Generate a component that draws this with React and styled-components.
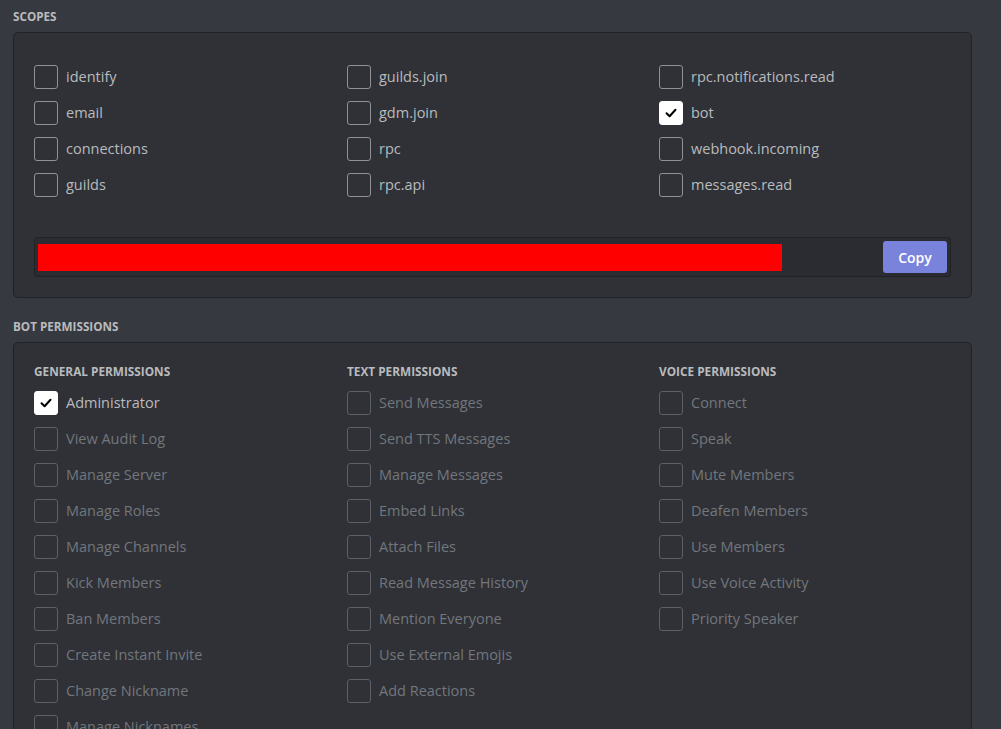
import styled, { createGlobalStyle } from "styled-components";

const scopes = [
  ["identify", "guilds.join", "rpc.notifications.read"],
  ["email", "gdm.join", "bot"],
  ["connections", "rpc", "webhook.incoming"],
  ["guilds", "rpc.api", "messages.read"],
];

const checkedScopes = ["bot"];

const permissionGroups = [
  {
    title: "General Permissions",
    items: [
      "Administrator",
      "View Audit Log",
      "Manage Server",
      "Manage Roles",
      "Manage Channels",
      "Kick Members",
      "Ban Members",
      "Create Instant Invite",
      "Change Nickname",
      "Manage Nicknames",
    ],
  },
  {
    title: "Text Permissions",
    items: [
      "Send Messages",
      "Send TTS Messages",
      "Manage Messages",
      "Embed Links",
      "Attach Files",
      "Read Message History",
      "Mention Everyone",
      "Use External Emojis",
      "Add Reactions",
    ],
  },
  {
    title: "Voice Permissions",
    items: [
      "Connect",
      "Speak",
      "Mute Members",
      "Deafen Members",
      "Use Members",
      "Use Voice Activity",
      "Priority Speaker",
    ],
  },
];

function Checkbox({ label, checked, disabled }) {
  return (
    <Option>
      <Box checked={checked} disabled={disabled}>
        {checked && (
          <svg width="14" height="14" viewBox="0 0 14 14">
            <path
              d="M2.5 7.2 L5.6 10.2 L11.5 3.8"
              fill="none"
              stroke="#000"
              strokeWidth="2"
              strokeLinecap="round"
              strokeLinejoin="round"
            />
          </svg>
        )}
      </Box>
      <Label disabled={disabled}>{label}</Label>
    </Option>
  );
}

function App() {
  return (
    <Page>
      <GlobalStyle />
      <SectionTitle>Scopes</SectionTitle>
      <Panel>
        <ScopeGrid>
          {scopes.flat().map((scope) => (
            <Checkbox
              key={scope}
              label={scope}
              checked={checkedScopes.includes(scope)}
            />
          ))}
        </ScopeGrid>
        <UrlField>
          <Redacted />
          <CopyButton>Copy</CopyButton>
        </UrlField>
      </Panel>
      <SectionTitle>Bot Permissions</SectionTitle>
      <Panel>
        <PermGrid>
          {permissionGroups.map((group) => (
            <Column key={group.title}>
              <GroupTitle>{group.title}</GroupTitle>
              {group.items.map((item) => (
                <Checkbox
                  key={item}
                  label={item}
                  checked={item === "Administrator"}
                  disabled={item !== "Administrator"}
                />
              ))}
            </Column>
          ))}
        </PermGrid>
      </Panel>
    </Page>
  );
}

const GlobalStyle = createGlobalStyle`
  html, body {
    margin: 0;
    padding: 0;
    background: #36393f;
    overflow: hidden;
  }
  * { box-sizing: border-box; }
`;

const Page = styled.div`
  width: 1001px;
  height: 729px;
  overflow: hidden;
  padding: 9px 29px 0 13px;
  font-family: "Open Sans", "Noto Sans", sans-serif;
  color: #b9bbbe;
`;

const SectionTitle = styled.h5`
  margin: 0 0 9px;
  font-size: 11.7px;
  line-height: 14px;
  font-weight: 700;
  text-transform: uppercase;
  color: #b9bbbe;
`;

const Panel = styled.section`
  background: #2f3136;
  border: 1px solid #202225;
  border-radius: 5px;
  padding: 21px 20px 20px;
  margin-bottom: 21px;
`;

const ScopeGrid = styled.div`
  display: grid;
  grid-template-columns: 313px 312px 1fr;
  row-gap: 12px;
  padding-top: 11px;
  margin-bottom: 40px;
`;

const PermGrid = styled.div`
  display: grid;
  grid-template-columns: 313px 312px 1fr;
`;

const Column = styled.div`
  display: flex;
  flex-direction: column;
  gap: 12px;
`;

const GroupTitle = styled.div`
  font-size: 11.8px;
  font-weight: 700;
  text-transform: uppercase;
  line-height: 14px;
  color: #b9bbbe;
  margin-bottom: 1px;
`;

const Option = styled.label`
  display: flex;
  align-items: center;
  gap: 8px;
  height: 24px;
`;

const Box = styled.span`
  width: 24px;
  height: 24px;
  flex: none;
  border-radius: 3px;
  display: flex;
  align-items: center;
  justify-content: center;
  background: ${({ checked }) => (checked ? "#fff" : "transparent")};
  border: 1px solid
    ${({ checked, disabled }) =>
      checked ? "#fff" : disabled ? "#5c5f66" : "#8e9297"};
`;

const Label = styled.span`
  font-size: 14.5px;
  line-height: 20px;
  color: ${({ disabled }) => (disabled ? "#72767d" : "#b9bbbe")};
`;

const UrlField = styled.div`
  display: flex;
  align-items: center;
  justify-content: space-between;
  height: 40px;
  background: #2a2c31;
  border: 1px solid #202225;
  border-radius: 3px;
  padding: 0 3px;
`;

const Redacted = styled.div`
  width: 744px;
  height: 27px;
  background: #ff0000;
`;

const CopyButton = styled.button`
  width: 64px;
  height: 32px;
  border: none;
  border-radius: 3px;
  background: #7983dc;
  color: #fff;
  font-family: "Open Sans", "Noto Sans", sans-serif;
  font-size: 14px;
  font-weight: 600;
  cursor: pointer;
`;

export default App;
